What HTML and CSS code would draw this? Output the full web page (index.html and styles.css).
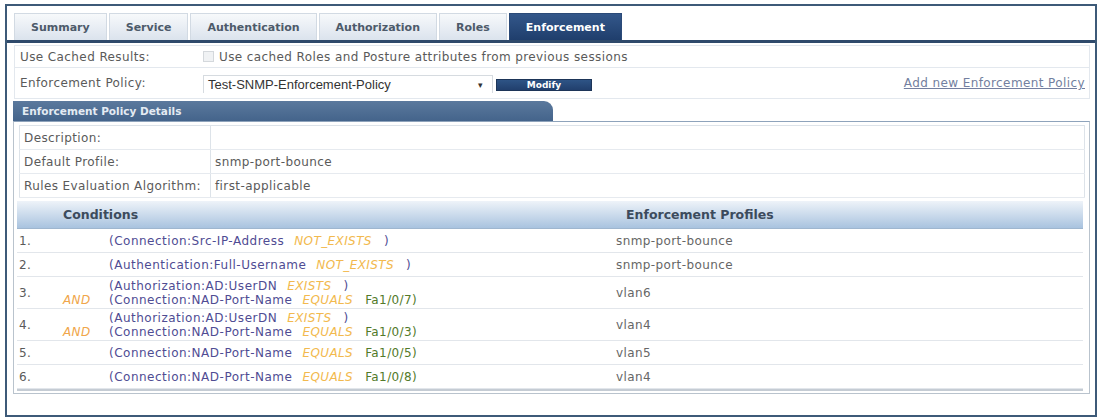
FILE: index.html
```html
<!DOCTYPE html>
<html lang="en">
<head>
    <meta charset="UTF-8">
    <title>Enforcement</title>
    <link rel="stylesheet" href="styles.css">
</head>
<body>
    <div class="frame">
        <!-- tab strip -->
        <div class="tabs">
            <div class="tab">Summary</div>
            <div class="tab">Service</div>
            <div class="tab">Authentication</div>
            <div class="tab">Authorization</div>
            <div class="tab">Roles</div>
            <div class="tab active">Enforcement</div>
        </div>

        <div class="opts">
            <div class="opt-row">
                <div class="opt-label">Use Cached Results:</div>
                <div class="opt-value">
                    <span class="chk"></span>
                    <span class="chk-text">Use cached Roles and Posture attributes from previous sessions</span>
                </div>
            </div>
            <div class="opt-row tall">
                <div class="opt-label">Enforcement Policy:</div>
                <div class="opt-value">
                    <div class="select">Test-SNMP-Enforcement-Policy<span class="arrow">&#9662;</span></div>
                    <button class="modify">Modify</button>
                    <a class="add-link" href="#">Add new Enforcement Policy</a>
                </div>
            </div>
        </div>

        <div class="panel">
            <div class="panel-head">Enforcement Policy Details</div>
            <div class="panel-body">
                <table class="details">
                    <tr><td class="dl">Description:</td><td></td></tr>
                    <tr><td class="dl">Default Profile:</td><td>snmp-port-bounce</td></tr>
                    <tr><td class="dl">Rules Evaluation Algorithm:</td><td>first-applicable</td></tr>
                </table>

                <div class="rules">
                    <div class="rules-head">
                        <div class="h-num"></div>
                        <div class="h-cond">Conditions</div>
                        <div class="h-prof">Enforcement Profiles</div>
                    </div>

                    <div class="rule">
                        <div class="num">1.</div>
                        <div class="cond">
                            <div class="line"><span class="and"></span><span class="attr">(Connection:Src-IP-Address</span><span class="op">NOT_EXISTS</span><span class="attr">)</span></div>
                        </div>
                        <div class="prof">snmp-port-bounce</div>
                    </div>
                    <div class="rule">
                        <div class="num">2.</div>
                        <div class="cond">
                            <div class="line"><span class="and"></span><span class="attr">(Authentication:Full-Username</span><span class="op">NOT_EXISTS</span><span class="attr">)</span></div>
                        </div>
                        <div class="prof">snmp-port-bounce</div>
                    </div>
                    <div class="rule two">
                        <div class="num">3.</div>
                        <div class="cond">
                            <div class="line"><span class="and"></span><span class="attr">(Authorization:AD:UserDN</span><span class="op">EXISTS</span><span class="attr">)</span></div>
                            <div class="line"><span class="and">AND</span><span class="attr">(Connection:NAD-Port-Name</span><span class="op">EQUALS</span><span class="val">Fa1/0/7)</span></div>
                        </div>
                        <div class="prof">vlan6</div>
                    </div>
                    <div class="rule two">
                        <div class="num">4.</div>
                        <div class="cond">
                            <div class="line"><span class="and"></span><span class="attr">(Authorization:AD:UserDN</span><span class="op">EXISTS</span><span class="attr">)</span></div>
                            <div class="line"><span class="and">AND</span><span class="attr">(Connection:NAD-Port-Name</span><span class="op">EQUALS</span><span class="val">Fa1/0/3)</span></div>
                        </div>
                        <div class="prof">vlan4</div>
                    </div>
                    <div class="rule">
                        <div class="num">5.</div>
                        <div class="cond">
                            <div class="line"><span class="and"></span><span class="attr">(Connection:NAD-Port-Name</span><span class="op">EQUALS</span><span class="val">Fa1/0/5)</span></div>
                        </div>
                        <div class="prof">vlan5</div>
                    </div>
                    <div class="rule">
                        <div class="num">6.</div>
                        <div class="cond">
                            <div class="line"><span class="and"></span><span class="attr">(Connection:NAD-Port-Name</span><span class="op">EQUALS</span><span class="val">Fa1/0/8)</span></div>
                        </div>
                        <div class="prof">vlan4</div>
                    </div>
                </div>
            </div>
        </div>
    </div>
</body>
</html>
```

FILE: styles.css
```css
body {
    margin: 0;
    background-color: #ffffff;
    font-family: "DejaVu Sans", Verdana, sans-serif;
    font-size: 12px;
    letter-spacing: 0.4px;
    color: #5a5a5a;
}
.frame {
    margin: 4px 6px 3px 5px;
    height: 409px;
    border: 2px solid #3d5a78;
    box-sizing: content-box;
}
.tabs {
    display: flex;
    gap: 2px;
    margin-top: 7px;
    padding-left: 7px;
    border-bottom: 3px solid #2f4a6b;
}
.tab {
    height: 27px;
    line-height: 28px;
    padding: 0 16px;
    font-size: 11px;
    letter-spacing: 0;
    font-weight: bold;
    color: #4d5a6a;
    background: linear-gradient(#f7f9fb, #dbe3ed);
    border: 1px solid #d2dae3;
    border-bottom: none;
    box-sizing: border-box;
}
.tab.active {
    color: #ffffff;
    background: linear-gradient(#33578a, #1f3e6c);
    border-color: #2b4a78;
}
.opts {
    margin: 2px 5px 0 7px;
    border: 1px solid #e3e8ee;
}
.opt-row {
    display: flex;
    align-items: center;
    height: 21px;
}
.opt-row.tall {
    height: 30px;
    border-top: 1px solid #e3e8ee;
}
.opt-label {
    width: 183px;
    padding-left: 5px;
    color: #5a5a5a;
}
.opt-value {
    display: flex;
    align-items: center;
    flex: 1;
    padding-right: 4px;
}
.chk {
    width: 9px;
    height: 9px;
    border: 1px solid #d4d8dc;
    background: #f0f2f4;
    margin-right: 5px;
}
.select {
    position: relative;
    width: 290px;
    height: 18px;
    line-height: 18px;
    margin-top: 2px;
    padding-left: 4px;
    border: 1px solid #d6dbe0;
    border-bottom: none;
    font-family: "Liberation Sans", Arial, sans-serif;
    font-size: 13px;
    letter-spacing: 0;
    color: #333333;
    box-sizing: border-box;
}
.arrow {
    position: absolute;
    right: 9px;
    top: 0;
    font-size: 9px;
    color: #333333;
}
.modify {
    width: 96px;
    height: 12px;
    margin: 4px 0 0 3px;
    padding: 0;
    border: 1px solid #1d3558;
    background: linear-gradient(#2e5486, #213f6d);
    color: #ffffff;
    font-family: "DejaVu Sans", Verdana, sans-serif;
    font-size: 9px;
    letter-spacing: 0;
    font-weight: bold;
    line-height: 10px;
}
.add-link {
    margin-left: auto;
    color: #737fa0;
    text-decoration: underline;
}
.panel {
    margin: 2px 5px 0 6px;
}
.panel-head {
    width: 540px;
    height: 20px;
    line-height: 20px;
    padding-left: 9px;
    font-weight: bold;
    font-size: 10.5px;
    letter-spacing: 0;
    color: #e4ebf3;
    background: linear-gradient(#5b799d, #44648b);
    border-radius: 0 9px 0 0;
    box-sizing: border-box;
}
.panel-body {
    border: 1px solid #b9c3cd;
    border-top: 1px solid #8ea3bb;
    padding: 3px 6px 4px 3px;
    height: 273px;
    box-sizing: border-box;
}
.details {
    width: 100%;
    border-collapse: collapse;
    border: 1px solid #dde3e9;
    margin-left: 2px;
}
.details td {
    height: 23px;
    padding: 0 3px 0 4px;
    border-bottom: 1px solid #e6eaef;
}
.details td.dl {
    width: 183px;
    border-right: 1px solid #dde3e9;
}
.rules {
    margin-top: 3px;
    border-bottom: 2px solid #c5ccd4;
}
.rules-head {
    display: flex;
    align-items: center;
    height: 27px;
    font-size: 12.5px;
    letter-spacing: 0;
    font-weight: bold;
    color: #3c4b5d;
    background: linear-gradient(#eef3f9, #a9c3df);
    border-bottom: 1px solid #9fb6cf;
}
.h-num {
    width: 46px;
}
.h-cond {
    width: 550px;
}
.h-prof {
    padding-left: 13px;
}
.rule {
    display: flex;
    align-items: center;
    height: 24px;
    border-bottom: 1px solid #e2e6eb;
    box-sizing: border-box;
}
.rule.two {
    height: 32px;
}
.num {
    width: 44px;
    padding-left: 2px;
}
.cond {
    width: 550px;
}
.line {
    display: flex;
    height: 14px;
    line-height: 14px;
}
.and {
    width: 46px;
    color: #f0a64a;
    font-style: italic;
}
.attr {
    color: #4f4c93;
    letter-spacing: 0.5px;
}
.op {
    margin: 0 12px 0 10px;
    color: #f2b94e;
    font-style: italic;
}
.val {
    color: #537a2a;
}
.prof {
    padding-left: 3px;
    color: #666666;
}
```
